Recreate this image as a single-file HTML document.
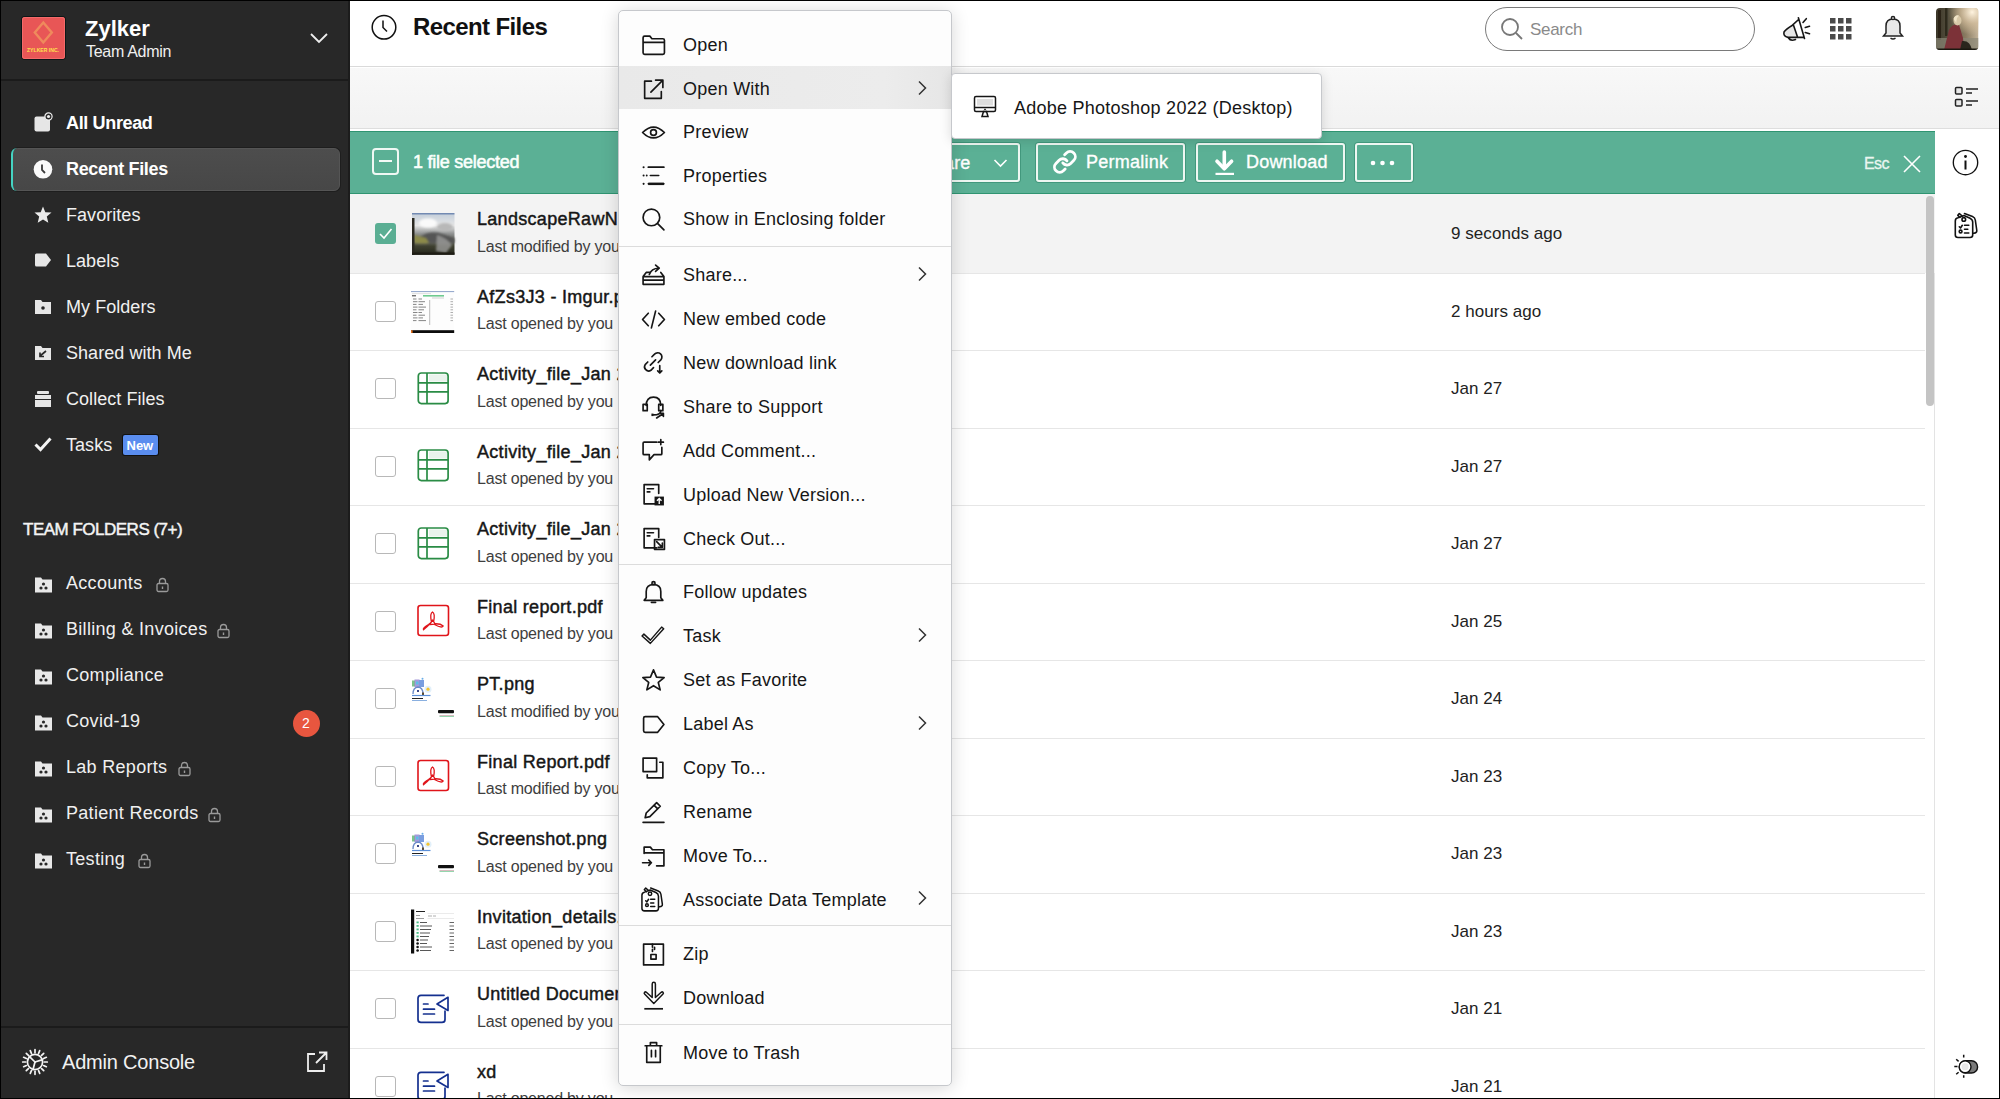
<!DOCTYPE html>
<html><head><meta charset="utf-8"><title>Recent Files</title>
<style>
html,body{margin:0;padding:0}
body{width:2000px;height:1099px;overflow:hidden;position:relative;background:#fff;font-family:"Liberation Sans", sans-serif}
.a{position:absolute}
.t{position:absolute;white-space:nowrap}
svg.a{overflow:visible}
</style></head><body>
<div class="a" style="left:0;top:0;width:2000px;height:1099px"><div class="a" style="left:0px;top:0px;width:350px;height:1099px;background:#282828"></div><div class="a" style="left:348px;top:0px;width:2px;height:1099px;background:#1c1c1c"></div><div class="a" style="left:0px;top:79px;width:348px;height:2px;background:#1b1b1b"></div><div class="a" style="left:22px;top:17px;width:42.5px;height:42px;background:#e85656;border-radius:3px;box-shadow:0 0 0 1px #0c1616,inset 0 0 0 1px #f46a6a"></div><svg class="a" style="left:22px;top:17px;" width="42" height="42" viewBox="0 0 42 42"><path d="M21.3 5.5 L29.8 15.5 L21.3 25.5 L12.8 15.5 Z" fill="none" stroke="#ef8a5c" stroke-width="2.4"/><text x="21" y="35.3" font-size="6" font-weight="bold" fill="#ffe14d" text-anchor="middle" textLength="32" lengthAdjust="spacingAndGlyphs" font-family="Liberation Sans">ZYLKER INC.</text></svg><div class="t" style="left:85px;top:18.38px;font-size:22px;line-height:22px;color:#fff;font-weight:700;letter-spacing:0px;">Zylker</div><div class="t" style="left:86px;top:44.26px;font-size:16px;line-height:16px;color:#f0f0f0;font-weight:400;letter-spacing:-0.3px;">Team Admin</div><svg class="a" style="left:309px;top:31px;" width="20" height="14" viewBox="0 0 20 14"><path d="M2 3 L10 11 L18 3" fill="none" stroke="#eee" stroke-width="1.8"/></svg><div class="a" style="left:12px;top:147.5px;width:328px;height:43px;background:linear-gradient(180deg,#4d4d4d,#474747);border:1px solid #555;border-radius:6px;box-sizing:border-box;box-shadow:0 0 0 1px #1e1e1e"></div><div class="a" style="left:11px;top:147.5px;width:6px;height:43px;border-left:2.5px solid #45d3c2;border-radius:6px 0 0 6px;box-sizing:border-box"></div><svg class="a" style="left:34px;top:113.5px;" width="18" height="18" viewBox="0 0 18 18"><rect x="0.5" y="2.5" width="15.5" height="15" rx="2" fill="#e6e6e6"/><circle cx="14.5" cy="2.5" r="3.6" fill="#282828" stroke="#eee" stroke-width="1.2"/><circle cx="14.5" cy="2.5" r="1.6" fill="#eee"/></svg><div class="t" style="left:66px;top:114.26px;font-size:18px;line-height:18px;color:#ffffff;font-weight:700;letter-spacing:-0.35px;">All Unread</div><svg class="a" style="left:34px;top:159.5px;" width="18" height="18" viewBox="0 0 18 18"><circle cx="9" cy="9.3" r="9.3" fill="#fafafa"/><path d="M8 4.5 V10 L11 13" stroke="#3a3a3a" stroke-width="1.8" fill="none"/></svg><div class="t" style="left:66px;top:160.26px;font-size:18px;line-height:18px;color:#ffffff;font-weight:700;letter-spacing:-0.35px;">Recent Files</div><svg class="a" style="left:34px;top:205.5px;" width="18" height="18" viewBox="0 0 18 18"><path d="M9 0.5 L11.3 6.2 L17.5 6.6 L12.8 10.6 L14.3 16.8 L9 13.4 L3.7 16.8 L5.2 10.6 L0.5 6.6 L6.7 6.2 Z" fill="#ececec"/></svg><div class="t" style="left:66px;top:206.26px;font-size:18px;line-height:18px;color:#f0f0f0;font-weight:400;letter-spacing:0.05px;">Favorites</div><svg class="a" style="left:34px;top:251.5px;" width="18" height="18" viewBox="0 0 18 18"><path d="M1 3 Q1 1.5 2.5 1.5 H12 L17 8 L12 14.5 H2.5 Q1 14.5 1 13 Z" fill="#e6e6e6"/></svg><div class="t" style="left:66px;top:252.26px;font-size:18px;line-height:18px;color:#f0f0f0;font-weight:400;letter-spacing:0.05px;">Labels</div><svg class="a" style="left:34px;top:297.5px;" width="18" height="18" viewBox="0 0 18 18"><path d="M1 2 H7 L8.5 4 H17 V16 H1 Z" fill="#e6e6e6"/><circle cx="9" cy="10" r="1.8" fill="#282828"/></svg><div class="t" style="left:66px;top:298.26px;font-size:18px;line-height:18px;color:#f0f0f0;font-weight:400;letter-spacing:0.05px;">My Folders</div><svg class="a" style="left:34px;top:343.5px;" width="18" height="18" viewBox="0 0 18 18"><path d="M1 2 H7 L8.5 4 H17 V16 H1 Z" fill="#e6e6e6"/><path d="M12 7 L6 12 M6 8.5 V12.5 H10" stroke="#282828" stroke-width="1.7" fill="none"/></svg><div class="t" style="left:66px;top:344.26px;font-size:18px;line-height:18px;color:#f0f0f0;font-weight:400;letter-spacing:0.05px;">Shared with Me</div><svg class="a" style="left:34px;top:389.5px;" width="18" height="18" viewBox="0 0 18 18"><rect x="3" y="1" width="12" height="3" rx="1" fill="#e6e6e6"/><rect x="1" y="5" width="16" height="4" fill="#e6e6e6"/><rect x="1" y="10" width="16" height="7" fill="#e6e6e6"/></svg><div class="t" style="left:66px;top:390.26px;font-size:18px;line-height:18px;color:#f0f0f0;font-weight:400;letter-spacing:0.05px;">Collect Files</div><svg class="a" style="left:34px;top:435.5px;" width="18" height="18" viewBox="0 0 18 18"><path d="M1.5 8.5 L6.5 13.5 L16.5 2.5" stroke="#f4f4f4" stroke-width="3" fill="none"/></svg><div class="t" style="left:66px;top:436.26px;font-size:18px;line-height:18px;color:#f0f0f0;font-weight:400;letter-spacing:0.05px;">Tasks</div><div class="a" style="left:123px;top:435px;width:35px;height:20px;background:#5a8def;border-radius:2px;box-shadow:0 0 0 1px #111"></div><div class="t" style="left:126.5px;top:438.50px;font-size:13px;line-height:13px;color:#fff;font-weight:700;letter-spacing:0px;">New</div><div class="t" style="left:23px;top:520.81px;font-size:17px;line-height:17px;color:#f4f4f4;font-weight:400;letter-spacing:-0.5px;-webkit-text-stroke:0.45px #f4f4f4">TEAM FOLDERS (7+)</div><svg class="a" style="left:34px;top:575.5px;" width="19" height="17" viewBox="0 0 19 17"><path d="M1 1.5 H7 L8.5 3.5 H18 V16.5 H1 Z" fill="#e8e8e8"/><circle cx="9.5" cy="8" r="1.6" fill="#282828"/><circle cx="7" cy="12" r="1.6" fill="#282828"/><circle cx="12" cy="12" r="1.6" fill="#282828"/></svg><div class="t" style="left:66px;top:574.26px;font-size:18px;line-height:18px;color:#f0f0f0;font-weight:400;letter-spacing:0.3px;">Accounts</div><svg class="a" style="left:156px;top:576.5px;" width="13" height="15" viewBox="0 0 13 15"><rect x="1" y="6.5" width="11" height="8" rx="1.5" fill="none" stroke="#9a9a9a" stroke-width="1.3"/><path d="M3.5 6.5 V4.5 A3 3 0 0 1 9.5 4.5 V6.5" fill="none" stroke="#9a9a9a" stroke-width="1.3"/><rect x="5.8" y="9.5" width="1.4" height="2.5" fill="#9a9a9a"/></svg><svg class="a" style="left:34px;top:621.5px;" width="19" height="17" viewBox="0 0 19 17"><path d="M1 1.5 H7 L8.5 3.5 H18 V16.5 H1 Z" fill="#e8e8e8"/><circle cx="9.5" cy="8" r="1.6" fill="#282828"/><circle cx="7" cy="12" r="1.6" fill="#282828"/><circle cx="12" cy="12" r="1.6" fill="#282828"/></svg><div class="t" style="left:66px;top:620.26px;font-size:18px;line-height:18px;color:#f0f0f0;font-weight:400;letter-spacing:0.3px;">Billing &amp; Invoices</div><svg class="a" style="left:217px;top:622.5px;" width="13" height="15" viewBox="0 0 13 15"><rect x="1" y="6.5" width="11" height="8" rx="1.5" fill="none" stroke="#9a9a9a" stroke-width="1.3"/><path d="M3.5 6.5 V4.5 A3 3 0 0 1 9.5 4.5 V6.5" fill="none" stroke="#9a9a9a" stroke-width="1.3"/><rect x="5.8" y="9.5" width="1.4" height="2.5" fill="#9a9a9a"/></svg><svg class="a" style="left:34px;top:667.5px;" width="19" height="17" viewBox="0 0 19 17"><path d="M1 1.5 H7 L8.5 3.5 H18 V16.5 H1 Z" fill="#e8e8e8"/><circle cx="9.5" cy="8" r="1.6" fill="#282828"/><circle cx="7" cy="12" r="1.6" fill="#282828"/><circle cx="12" cy="12" r="1.6" fill="#282828"/></svg><div class="t" style="left:66px;top:666.26px;font-size:18px;line-height:18px;color:#f0f0f0;font-weight:400;letter-spacing:0.3px;">Compliance</div><svg class="a" style="left:34px;top:713.5px;" width="19" height="17" viewBox="0 0 19 17"><path d="M1 1.5 H7 L8.5 3.5 H18 V16.5 H1 Z" fill="#e8e8e8"/><circle cx="9.5" cy="8" r="1.6" fill="#282828"/><circle cx="7" cy="12" r="1.6" fill="#282828"/><circle cx="12" cy="12" r="1.6" fill="#282828"/></svg><div class="t" style="left:66px;top:712.26px;font-size:18px;line-height:18px;color:#f0f0f0;font-weight:400;letter-spacing:0.3px;">Covid-19</div><div class="a" style="left:293px;top:709.5px;width:27px;height:27px;background:#e8563f;border-radius:50%"></div><div class="t" style="left:302px;top:716.15px;font-size:14px;line-height:14px;color:#fff;font-weight:400;letter-spacing:0px;">2</div><svg class="a" style="left:34px;top:759.5px;" width="19" height="17" viewBox="0 0 19 17"><path d="M1 1.5 H7 L8.5 3.5 H18 V16.5 H1 Z" fill="#e8e8e8"/><circle cx="9.5" cy="8" r="1.6" fill="#282828"/><circle cx="7" cy="12" r="1.6" fill="#282828"/><circle cx="12" cy="12" r="1.6" fill="#282828"/></svg><div class="t" style="left:66px;top:758.26px;font-size:18px;line-height:18px;color:#f0f0f0;font-weight:400;letter-spacing:0.3px;">Lab Reports</div><svg class="a" style="left:178px;top:760.5px;" width="13" height="15" viewBox="0 0 13 15"><rect x="1" y="6.5" width="11" height="8" rx="1.5" fill="none" stroke="#9a9a9a" stroke-width="1.3"/><path d="M3.5 6.5 V4.5 A3 3 0 0 1 9.5 4.5 V6.5" fill="none" stroke="#9a9a9a" stroke-width="1.3"/><rect x="5.8" y="9.5" width="1.4" height="2.5" fill="#9a9a9a"/></svg><svg class="a" style="left:34px;top:805.5px;" width="19" height="17" viewBox="0 0 19 17"><path d="M1 1.5 H7 L8.5 3.5 H18 V16.5 H1 Z" fill="#e8e8e8"/><circle cx="9.5" cy="8" r="1.6" fill="#282828"/><circle cx="7" cy="12" r="1.6" fill="#282828"/><circle cx="12" cy="12" r="1.6" fill="#282828"/></svg><div class="t" style="left:66px;top:804.26px;font-size:18px;line-height:18px;color:#f0f0f0;font-weight:400;letter-spacing:0.3px;">Patient Records</div><svg class="a" style="left:208px;top:806.5px;" width="13" height="15" viewBox="0 0 13 15"><rect x="1" y="6.5" width="11" height="8" rx="1.5" fill="none" stroke="#9a9a9a" stroke-width="1.3"/><path d="M3.5 6.5 V4.5 A3 3 0 0 1 9.5 4.5 V6.5" fill="none" stroke="#9a9a9a" stroke-width="1.3"/><rect x="5.8" y="9.5" width="1.4" height="2.5" fill="#9a9a9a"/></svg><svg class="a" style="left:34px;top:851.5px;" width="19" height="17" viewBox="0 0 19 17"><path d="M1 1.5 H7 L8.5 3.5 H18 V16.5 H1 Z" fill="#e8e8e8"/><circle cx="9.5" cy="8" r="1.6" fill="#282828"/><circle cx="7" cy="12" r="1.6" fill="#282828"/><circle cx="12" cy="12" r="1.6" fill="#282828"/></svg><div class="t" style="left:66px;top:850.26px;font-size:18px;line-height:18px;color:#f0f0f0;font-weight:400;letter-spacing:0.3px;">Testing</div><svg class="a" style="left:138px;top:852.5px;" width="13" height="15" viewBox="0 0 13 15"><rect x="1" y="6.5" width="11" height="8" rx="1.5" fill="none" stroke="#9a9a9a" stroke-width="1.3"/><path d="M3.5 6.5 V4.5 A3 3 0 0 1 9.5 4.5 V6.5" fill="none" stroke="#9a9a9a" stroke-width="1.3"/><rect x="5.8" y="9.5" width="1.4" height="2.5" fill="#9a9a9a"/></svg><div class="a" style="left:0px;top:1026px;width:348px;height:2px;background:#1b1b1b"></div><svg class="a" style="left:22.4px;top:1049.4px;" width="26" height="26" viewBox="0 0 26 26"><g stroke="#f4f4f4" stroke-width="1.7" fill="none" stroke-linecap="round"><circle cx="13" cy="13" r="7.6"/><path d="M13 13 L20.62 10.57"/><path d="M13 13 L10.93 20.73"/><path d="M13 13 L7.25 7.44"/><path d="M22.30 13.00 L25.30 13.00"/><path d="M21.59 16.56 L24.36 17.71"/><path d="M19.58 19.58 L21.70 21.70"/><path d="M16.56 21.59 L17.71 24.36"/><path d="M13.00 22.30 L13.00 25.30"/><path d="M9.44 21.59 L8.29 24.36"/><path d="M6.42 19.58 L4.30 21.70"/><path d="M4.41 16.56 L1.64 17.71"/><path d="M3.70 13.00 L0.70 13.00"/><path d="M4.41 9.44 L1.64 8.29"/><path d="M6.42 6.42 L4.30 4.30"/><path d="M9.44 4.41 L8.29 1.64"/><path d="M13.00 3.70 L13.00 0.70"/><path d="M16.56 4.41 L17.71 1.64"/><path d="M19.58 6.42 L21.70 4.30"/><path d="M21.59 9.44 L24.36 8.29"/></g></svg><div class="t" style="left:62px;top:1052.37px;font-size:20px;line-height:20px;color:#f2f2f2;font-weight:400;letter-spacing:-0.2px;">Admin Console</div><svg class="a" style="left:305px;top:1050px;" width="24" height="24" viewBox="0 0 24 24"><g stroke="#eee" stroke-width="1.8" fill="none"><path d="M10 4 H3 V21 H19 V14"/><path d="M11 13 L21 3 M14 2.5 H21.5 V10"/></g></svg></div>
<div class="a" style="left:0;top:0;width:2000px;height:1099px;clip-path:inset(0 0 0 350px)"><div class="a" style="left:350px;top:0px;width:1650px;height:66px;background:#fff"></div><div class="a" style="left:350px;top:66px;width:1650px;height:1px;background:#dadada"></div><svg class="a" style="left:370px;top:13px;" width="28" height="28" viewBox="0 0 28 28"><circle cx="14" cy="14.3" r="11.8" fill="none" stroke="#111" stroke-width="1.5"/><path d="M13 7.5 V14.5 L17 18.5" fill="none" stroke="#111" stroke-width="1.5"/></svg><div class="t" style="left:413px;top:15.18px;font-size:24px;line-height:24px;color:#111;font-weight:700;letter-spacing:-0.6px;">Recent Files</div><div class="a" style="left:1485px;top:7px;width:270px;height:44px;border:1.5px solid #7a7a7a;border-radius:22px;box-sizing:border-box;background:#fff"></div><svg class="a" style="left:1499px;top:17px;" width="26" height="24" viewBox="0 0 26 24"><circle cx="11" cy="10" r="8" fill="none" stroke="#777" stroke-width="1.8"/><path d="M17 16 L23 22" stroke="#777" stroke-width="1.8"/></svg><div class="t" style="left:1530px;top:20.81px;font-size:17px;line-height:17px;color:#8a8a8a;font-weight:400;letter-spacing:-0.3px;">Search</div><svg class="a" style="left:1778px;top:10px;" width="40" height="38" viewBox="0 0 40 38"><g fill="none" stroke="#161616" stroke-width="1.6" stroke-linecap="round" stroke-linejoin="round"><path d="M15 15.3 L6.5 21.5 Q4.5 26 10 27.3 L19.5 27.3 Z" fill="#e6e6e6" stroke="none"/><path d="M14.5 15.2 L20.6 9.5 M20.4 7.8 L26.5 28.5 M10 27.4 L26 27.4 M14.5 15.2 Q8 19 6 22 Q5 26.5 10 27.4 M15.6 15.5 L19.6 27.3 M10.5 28 Q12.5 31.5 17.5 29.5 M25 12.5 L28.3 8.7 M27.3 17.5 L31.5 16.2 M27.3 22.5 L31.5 23.7"/></g></svg><svg class="a" style="left:1830px;top:18px;" width="22" height="22" viewBox="0 0 22 22"><rect x="0" y="0" width="5.5" height="5.5" fill="#4a4a4a"/><rect x="8" y="0" width="5.5" height="5.5" fill="#4a4a4a"/><rect x="16" y="0" width="5.5" height="5.5" fill="#4a4a4a"/><rect x="0" y="8" width="5.5" height="5.5" fill="#4a4a4a"/><rect x="8" y="8" width="5.5" height="5.5" fill="#4a4a4a"/><rect x="16" y="8" width="5.5" height="5.5" fill="#4a4a4a"/><rect x="0" y="16" width="5.5" height="5.5" fill="#4a4a4a"/><rect x="8" y="16" width="5.5" height="5.5" fill="#4a4a4a"/><rect x="16" y="16" width="5.5" height="5.5" fill="#4a4a4a"/></svg><svg class="a" style="left:1881px;top:15px;" width="24" height="25" viewBox="0 0 24 25"><g fill="#e8e8e8" stroke="#222" stroke-width="1.5"><path d="M5 18 V11 Q5 4 12 4 Q19 4 19 11 V18 L21.5 21 H2.5 Z"/><circle cx="12" cy="3" r="1.6" fill="#fff"/></g><path d="M9.5 23.2 Q12 24.8 14.5 23.2" stroke="#222" stroke-width="1.5" fill="none"/></svg><svg class="a" style="left:1935.5px;top:7.5px;" width="42.5" height="42" viewBox="0 0 42.5 42"><defs><clipPath id="av"><rect width="42.5" height="42" rx="4"/></clipPath><linearGradient id="avg" x1="0" y1="0" x2="1" y2="0"><stop offset="0" stop-color="#3b3628"/><stop offset=".35" stop-color="#5a5442"/><stop offset=".7" stop-color="#8a7c62"/><stop offset="1" stop-color="#c4b49a"/></linearGradient><radialGradient id="sun" cx=".85" cy=".1" r=".55"><stop offset="0" stop-color="#fff4e0"/><stop offset=".5" stop-color="#d8c2a0" stop-opacity=".7"/><stop offset="1" stop-color="#d8c2a0" stop-opacity="0"/></radialGradient><filter id="avb"><feGaussianBlur stdDeviation=".6"/></filter></defs><g clip-path="url(#av)"><rect width="42.5" height="42" fill="url(#avg)"/><rect width="42.5" height="42" fill="url(#sun)"/><g filter="url(#avb)"><rect x="2" y="2" width="3" height="30" fill="#2a2418"/><rect x="9" y="0" width="2.5" height="28" fill="#2e2a1e"/><path d="M0 30 H42.5 V42 H0 Z" fill="#8a8878" opacity=".7"/><path d="M8 42 L13 22 Q17 15 23 17 L27 30 L28 42 Z" fill="#7c3038"/><ellipse cx="21.5" cy="12.5" rx="4" ry="5" fill="#d8c8a8"/><path d="M17.5 11 Q19 6.5 23 7.5 Q20 10 20.5 15 Z" fill="#f0e4c8"/><path d="M26 33 Q34 32 36 42 L24 42 Z" fill="#2a261c"/></g><rect y="40.5" width="42.5" height="1.5" fill="#1a1810"/></g></svg><div class="a" style="left:350px;top:67px;width:1650px;height:61px;background:linear-gradient(180deg,#f8f8f8,#f2f2f2);border-top:1px solid #fff;box-sizing:border-box"></div><div class="a" style="left:350px;top:128px;width:1650px;height:1px;background:#dedede"></div><svg class="a" style="left:1954px;top:86px;" width="27" height="24" viewBox="0 0 27 24"><g fill="#e8e8e8" stroke="#222" stroke-width="1.5"><rect x="1.5" y="1.5" width="6.5" height="6.5" rx="1"/><rect x="1.5" y="13.5" width="6.5" height="6.5" rx="1"/></g><g stroke="#222" stroke-width="1.5"><path d="M12 3 H24 M12 7 H18 M12 15 H24 M12 19 H18"/></g></svg><div class="a" style="left:1935px;top:129px;width:65px;height:970px;background:#fff"></div><div class="a" style="left:1934px;top:194px;width:1px;height:905px;background:#e3e3e3"></div><svg class="a" style="left:1952px;top:149px;" width="27" height="27" viewBox="0 0 27 27"><circle cx="13.5" cy="13.5" r="12.2" fill="none" stroke="#111" stroke-width="1.35"/><rect x="12.5" y="11.5" width="2" height="9" fill="#111"/><circle cx="13.5" cy="7.5" r="1.4" fill="#111"/></svg><svg class="a" style="left:1948px;top:205px;" width="36" height="40" viewBox="0 0 36 40"><g fill="none" stroke="#111" stroke-width="1.6" stroke-linecap="round" stroke-linejoin="round"><path d="M16.5 8.5 L24.5 11.5 Q27 12.5 27.3 15 L28.8 25.5 Q29 28 26 28.2 L24.7 28.2"/><path d="M7.3 30 V16 Q7.3 13.3 10 12.8 L16 10.5 L22 13.2 Q24.7 14.6 24.7 17 V30 Q24.7 32.5 22 32.5 H10 Q7.3 32.5 7.3 30 Z" fill="#fff"/><circle cx="15.8" cy="14.4" r="1.8"/><path d="M12 12.3 L9.8 10.3 L11.3 8.5 L14 10.8"/><path d="M11.3 21.8 L12.5 23 L14.3 20.3 M16.5 20.2 H20.8 M16.5 24.2 H19.8 M16.5 28 H20.8"/><circle cx="12.6" cy="26.5" r="1.4"/></g></svg><svg class="a" style="left:1940px;top:1045px;" width="50" height="45" viewBox="0 0 50 45"><g stroke="#111" stroke-width="1.5"><path d="M23.7 9.8 V12.5 M23.7 30.2 V32.8 M14.3 21.5 H17.5 M16.2 14.2 L18.6 16.4 M16.2 29.3 L18.6 27.2"/></g><rect x="19.3" y="15.8" width="18.3" height="12.2" rx="6.1" fill="#7a7a7a" stroke="#111" stroke-width="1.4"/><circle cx="25.1" cy="21.8" r="5.9" fill="#fff" stroke="#111" stroke-width="1.4"/><circle cx="25.1" cy="21.8" r="3.5" fill="#e8e8e8"/></svg><div class="a" style="left:350px;top:131px;width:1585px;height:63px;background:#5bb095;border-top:1px solid #2f9471;border-bottom:1px solid #2f9471;box-sizing:border-box"></div><div class="a" style="left:372px;top:148px;width:27px;height:27px;border:2px solid #f0f8f4;border-radius:4px;box-sizing:border-box"></div><div class="a" style="left:379px;top:160px;width:13px;height:2px;background:#f4faf7"></div><div class="t" style="left:413px;top:152.96px;font-size:18px;line-height:18px;color:#fafffc;font-weight:400;letter-spacing:-0.25px;-webkit-text-stroke:0.55px #fafffc">1 file selected</div><div class="a" style="left:930px;top:143px;width:89.5px;height:39px;border:2px solid #eef7f2;border-radius:3px;box-sizing:border-box;box-shadow:0 0 0 1px rgba(20,110,80,.35)"></div><div class="t" style="left:921.5px;top:154.06px;font-size:18px;line-height:18px;color:#fff;font-weight:400;letter-spacing:0.2px;-webkit-text-stroke:0.35px #fff">Share</div><svg class="a" style="left:993px;top:157.5px;" width="15" height="10" viewBox="0 0 15 10"><path d="M1.5 2 L7.5 8 L13.5 2" stroke="#fff" stroke-width="1.6" fill="none"/></svg><div class="a" style="left:1036px;top:143px;width:148.5px;height:39px;border:2px solid #eef7f2;border-radius:3px;box-sizing:border-box;box-shadow:0 0 0 1px rgba(20,110,80,.35)"></div><svg class="a" style="left:1054px;top:151.3px;" width="21.8" height="21.8" viewBox="1.6 1.6 20.8 20.8"><g fill="none" stroke="#fff" stroke-width="2.7" stroke-linecap="round" stroke-linejoin="round"><path d="M10 13a5 5 0 0 0 7.54.54l3-3a5 5 0 0 0-7.07-7.07l-1.72 1.71"/><path d="M14 11a5 5 0 0 0-7.54-.54l-3 3a5 5 0 0 0 7.07 7.07l1.71-1.71"/></g></svg><div class="t" style="left:1086px;top:153.46px;font-size:18px;line-height:18px;color:#fff;font-weight:400;letter-spacing:0.25px;-webkit-text-stroke:0.35px #fff">Permalink</div><div class="a" style="left:1196px;top:143px;width:148.5px;height:39px;border:2px solid #eef7f2;border-radius:3px;box-sizing:border-box;box-shadow:0 0 0 1px rgba(20,110,80,.35)"></div><svg class="a" style="left:1213px;top:149px;" width="24" height="28" viewBox="0 0 24 28"><path d="M11.3 3 V17" stroke="#fff" stroke-width="3.6" stroke-linecap="round"/><path d="M4 12.2 L11.3 19.8 L18.6 12.2" stroke="#fff" stroke-width="3.6" fill="none" stroke-linecap="round" stroke-linejoin="round"/><rect x="2.5" y="23.8" width="18.5" height="2.2" fill="#fff"/></svg><div class="t" style="left:1246px;top:153.46px;font-size:18px;line-height:18px;color:#fff;font-weight:400;letter-spacing:0.2px;-webkit-text-stroke:0.35px #fff">Download</div><div class="a" style="left:1354.5px;top:143px;width:58px;height:39px;border:2px solid #eef7f2;border-radius:3px;box-sizing:border-box;box-shadow:0 0 0 1px rgba(20,110,80,.35)"></div><svg class="a" style="left:1368px;top:158px;" width="30" height="10" viewBox="0 0 30 10"><circle cx="5" cy="5" r="2.3" fill="#fff"/><circle cx="14.5" cy="5" r="2.3" fill="#fff"/><circle cx="24" cy="5" r="2.3" fill="#fff"/></svg><div class="t" style="left:1864px;top:156.06px;font-size:16px;line-height:16px;color:#eaf6f0;font-weight:400;letter-spacing:-0.6px;-webkit-text-stroke:0.3px #eaf6f0">Esc</div><svg class="a" style="left:1902px;top:154px;" width="20" height="20" viewBox="0 0 20 20"><path d="M2 2 L18 18 M18 2 L2 18" stroke="#fff" stroke-width="1.6"/></svg></div>
<div class="a" style="left:0;top:0;width:2000px;height:1099px;clip-path:inset(194px 65px 0 350px)"><div class="a" style="left:350px;top:194px;width:1585px;height:79px;background:#f3f3f3"></div><div class="a" style="left:350px;top:273px;width:1575px;height:1px;background:#e6e6e6"></div><div class="a" style="left:350px;top:350px;width:1575px;height:1px;background:#e6e6e6"></div><div class="a" style="left:350px;top:428px;width:1575px;height:1px;background:#e6e6e6"></div><div class="a" style="left:350px;top:505px;width:1575px;height:1px;background:#e6e6e6"></div><div class="a" style="left:350px;top:583px;width:1575px;height:1px;background:#e6e6e6"></div><div class="a" style="left:350px;top:660px;width:1575px;height:1px;background:#e6e6e6"></div><div class="a" style="left:350px;top:738px;width:1575px;height:1px;background:#e6e6e6"></div><div class="a" style="left:350px;top:815px;width:1575px;height:1px;background:#e6e6e6"></div><div class="a" style="left:350px;top:893px;width:1575px;height:1px;background:#e6e6e6"></div><div class="a" style="left:350px;top:970px;width:1575px;height:1px;background:#e6e6e6"></div><div class="a" style="left:350px;top:1048px;width:1575px;height:1px;background:#e6e6e6"></div><div class="a" style="left:375px;top:223px;width:21px;height:21px;background:#5aae93;border-radius:3px"></div><svg class="a" style="left:375px;top:223px;" width="21" height="21" viewBox="0 0 21 21"><path d="M5 11 L9 15 L16.5 6" stroke="#fff" stroke-width="1.6" fill="none"/></svg><svg class="a" style="left:411.75px;top:212.75px;" width="42.5" height="41.75" viewBox="0 0 42.5 41.75"><defs><linearGradient id="ph" x1="0" y1="0" x2="0" y2="1"><stop offset="0" stop-color="#5c78a8"/><stop offset=".06" stop-color="#c9d2dc"/><stop offset=".3" stop-color="#e6e6e6"/><stop offset=".5" stop-color="#8e9090"/><stop offset=".65" stop-color="#6c6e66"/><stop offset=".8" stop-color="#3e4030"/><stop offset="1" stop-color="#23241a"/></linearGradient><filter id="bl"><feGaussianBlur stdDeviation="1"/></filter></defs><rect width="42.5" height="41.75" fill="url(#ph)"/><g filter="url(#bl)"><ellipse cx="16" cy="10" rx="9" ry="4.5" fill="#fafafa"/><ellipse cx="33" cy="14" rx="8" ry="4" fill="#b8b8b8"/><path d="M8 24 Q18 17 30 21 L42.5 25 V30 L8 30 Z" fill="#555"/><path d="M2 22 L14 25 L17 30 Q10 31 2 30 Z" fill="#8c8a48"/><path d="M25 22 Q33 24 40 32 L34 40 L24 38 Z" fill="#9a9a98" opacity=".8"/></g><rect x="0" y="5" width="2.5" height="37" fill="#2a2820"/><rect x="0" y="39.5" width="42.5" height="2.25" fill="#1e1c14"/></svg><div class="t" style="left:477px;top:210.46px;font-size:18px;line-height:18px;color:#161616;font-weight:400;letter-spacing:0.3px;-webkit-text-stroke:0.45px #161616">LandscapeRawNG_1029.jpg</div><div class="t" style="left:477px;top:238.56px;font-size:16px;line-height:16px;color:#3e3e3e;font-weight:400;letter-spacing:-0.2px;">Last modified by you</div><div class="t" style="left:1451px;top:225.31px;font-size:17px;line-height:17px;color:#222;font-weight:400;letter-spacing:0.05px;">9 seconds ago</div><div class="a" style="left:375px;top:301px;width:21px;height:21px;border:1.6px solid #b8b8b8;border-radius:3px;box-sizing:border-box;background:#fff"></div><svg class="a" style="left:411.3px;top:291px;" width="43.2" height="42" viewBox="0 0 43.2 42"><rect width="43.2" height="42" fill="#fdfdfd"/><path d="M0 0.6 H43.2" stroke="#8ea3c9" stroke-width="1"/><path d="M1 2.6 H20" stroke="#ccc" stroke-width=".6"/><path d="M12 4.8 H33" stroke="#6fca90" stroke-width="1.6"/><path d="M1 4.8 H5" stroke="#333" stroke-width="1"/><path d="M18.7 9 V34" stroke="#aaa" stroke-width=".8"/><path d="M21 7 H33" stroke="#bbb" stroke-width=".7"/><path d="M2 8.0 H5.5 M7.5 8.0 H11" stroke="#777" stroke-width=".9"/><path d="M39.5 8.0 H42" stroke="#999" stroke-width=".8"/><path d="M2 10.7 H6.5 M7.5 10.7 H14" stroke="#777" stroke-width=".9"/><path d="M39.5 10.7 H42" stroke="#999" stroke-width=".8"/><path d="M2 13.4 H5.5 M7.5 13.4 H12" stroke="#777" stroke-width=".9"/><path d="M39.5 13.4 H42" stroke="#999" stroke-width=".8"/><path d="M2 16.1 H6.5 M7.5 16.1 H15" stroke="#777" stroke-width=".9"/><path d="M39.5 16.1 H42" stroke="#999" stroke-width=".8"/><path d="M2 18.8 H5.5 M7.5 18.8 H13" stroke="#777" stroke-width=".9"/><path d="M39.5 18.8 H42" stroke="#999" stroke-width=".8"/><path d="M2 21.5 H6.5 M7.5 21.5 H11" stroke="#777" stroke-width=".9"/><path d="M39.5 21.5 H42" stroke="#999" stroke-width=".8"/><path d="M2 24.2 H5.5 M7.5 24.2 H14" stroke="#777" stroke-width=".9"/><path d="M39.5 24.2 H42" stroke="#999" stroke-width=".8"/><path d="M2 26.9 H6.5 M7.5 26.9 H12" stroke="#777" stroke-width=".9"/><path d="M39.5 26.9 H42" stroke="#999" stroke-width=".8"/><path d="M2 29.6 H5.5 M7.5 29.6 H15" stroke="#777" stroke-width=".9"/><path d="M39.5 29.6 H42" stroke="#999" stroke-width=".8"/><rect x="0" y="39.2" width="43.2" height="2.8" fill="#0c0c0c"/><rect x="0" y="39.2" width="1.6" height="2.8" fill="#e8701a"/></svg><div class="t" style="left:477px;top:287.96px;font-size:18px;line-height:18px;color:#161616;font-weight:400;letter-spacing:0.3px;-webkit-text-stroke:0.45px #161616">AfZs3J3 - Imgur.png</div><div class="t" style="left:477px;top:316.06px;font-size:16px;line-height:16px;color:#3e3e3e;font-weight:400;letter-spacing:-0.2px;">Last opened by you</div><div class="t" style="left:1451px;top:302.81px;font-size:17px;line-height:17px;color:#222;font-weight:400;letter-spacing:0.05px;">2 hours ago</div><div class="a" style="left:375px;top:378px;width:21px;height:21px;border:1.6px solid #b8b8b8;border-radius:3px;box-sizing:border-box;background:#fff"></div><svg class="a" style="left:415px;top:370px;" width="36" height="36" viewBox="0 0 36 36"><rect x="14" y="4.5" width="18" height="7" fill="#e9f3ec"/><g fill="none" stroke="#2a8c45" stroke-width="1.7"><rect x="3.3" y="3" width="29.8" height="30.6" rx="3"/><path d="M3.3 12.9 H33.1 M3.3 21.9 H33.1 M12 3 V33.6"/></g></svg><div class="t" style="left:477px;top:365.46px;font-size:18px;line-height:18px;color:#161616;font-weight:400;letter-spacing:0.3px;-webkit-text-stroke:0.45px #161616">Activity_file_Jan 27.xlsx</div><div class="t" style="left:477px;top:393.56px;font-size:16px;line-height:16px;color:#3e3e3e;font-weight:400;letter-spacing:-0.2px;">Last opened by you</div><div class="t" style="left:1451px;top:380.31px;font-size:17px;line-height:17px;color:#222;font-weight:400;letter-spacing:0.05px;">Jan 27</div><div class="a" style="left:375px;top:456px;width:21px;height:21px;border:1.6px solid #b8b8b8;border-radius:3px;box-sizing:border-box;background:#fff"></div><svg class="a" style="left:415px;top:447px;" width="36" height="36" viewBox="0 0 36 36"><rect x="14" y="4.5" width="18" height="7" fill="#e9f3ec"/><g fill="none" stroke="#2a8c45" stroke-width="1.7"><rect x="3.3" y="3" width="29.8" height="30.6" rx="3"/><path d="M3.3 12.9 H33.1 M3.3 21.9 H33.1 M12 3 V33.6"/></g></svg><div class="t" style="left:477px;top:442.96px;font-size:18px;line-height:18px;color:#161616;font-weight:400;letter-spacing:0.3px;-webkit-text-stroke:0.45px #161616">Activity_file_Jan 27.xlsx</div><div class="t" style="left:477px;top:471.06px;font-size:16px;line-height:16px;color:#3e3e3e;font-weight:400;letter-spacing:-0.2px;">Last opened by you</div><div class="t" style="left:1451px;top:457.81px;font-size:17px;line-height:17px;color:#222;font-weight:400;letter-spacing:0.05px;">Jan 27</div><div class="a" style="left:375px;top:533px;width:21px;height:21px;border:1.6px solid #b8b8b8;border-radius:3px;box-sizing:border-box;background:#fff"></div><svg class="a" style="left:415px;top:525px;" width="36" height="36" viewBox="0 0 36 36"><rect x="14" y="4.5" width="18" height="7" fill="#e9f3ec"/><g fill="none" stroke="#2a8c45" stroke-width="1.7"><rect x="3.3" y="3" width="29.8" height="30.6" rx="3"/><path d="M3.3 12.9 H33.1 M3.3 21.9 H33.1 M12 3 V33.6"/></g></svg><div class="t" style="left:477px;top:520.46px;font-size:18px;line-height:18px;color:#161616;font-weight:400;letter-spacing:0.3px;-webkit-text-stroke:0.45px #161616">Activity_file_Jan 27.xlsx</div><div class="t" style="left:477px;top:548.56px;font-size:16px;line-height:16px;color:#3e3e3e;font-weight:400;letter-spacing:-0.2px;">Last opened by you</div><div class="t" style="left:1451px;top:535.31px;font-size:17px;line-height:17px;color:#222;font-weight:400;letter-spacing:0.05px;">Jan 27</div><div class="a" style="left:375px;top:611px;width:21px;height:21px;border:1.6px solid #b8b8b8;border-radius:3px;box-sizing:border-box;background:#fff"></div><svg class="a" style="left:415px;top:602px;" width="36" height="36" viewBox="0 0 36 36"><rect x="3" y="3.5" width="30.5" height="30" rx="2.5" fill="none" stroke="#e0141a" stroke-width="1.6"/><g fill="none" stroke="#e0141a" stroke-width="1.3" stroke-linejoin="round"><path d="M16.3 19 Q14.8 11.5 17.5 10 Q20.2 11.5 18.7 19 Z"/><path d="M15.5 21 Q11.5 25.5 8.5 27.8 Q7.3 26 13.5 22.5 Z"/><path d="M19.8 21.8 Q25.5 21.5 28.2 24 Q27 26.5 20 22.8 Z"/><path d="M17.5 18 L20.3 22.2 L14.8 22.6 Z"/></g></svg><div class="t" style="left:477px;top:597.96px;font-size:18px;line-height:18px;color:#161616;font-weight:400;letter-spacing:0.3px;-webkit-text-stroke:0.45px #161616">Final report.pdf</div><div class="t" style="left:477px;top:626.06px;font-size:16px;line-height:16px;color:#3e3e3e;font-weight:400;letter-spacing:-0.2px;">Last opened by you</div><div class="t" style="left:1451px;top:612.81px;font-size:17px;line-height:17px;color:#222;font-weight:400;letter-spacing:0.05px;">Jan 25</div><div class="a" style="left:375px;top:688px;width:21px;height:21px;border:1.6px solid #b8b8b8;border-radius:3px;box-sizing:border-box;background:#fff"></div><svg class="a" style="left:412px;top:675px;" width="45" height="46" viewBox="0 0 45 46"><rect x="0" y="5.5" width="3" height="6" fill="#7dc48a"/><rect x="2.5" y="4.5" width="5" height="7.5" fill="#8e7fd0" opacity=".8"/><rect x="7" y="5" width="5" height="7" fill="#7a9ee0"/><rect x="4" y="6.5" width="2.5" height="3" fill="#5ac0e8"/><circle cx="10.5" cy="3.8" r="1" fill="#6aaee8"/><circle cx="16" cy="14.2" r="3.5" fill="#cfe6f7" opacity=".6"/><path d="M1 19 Q1 12.5 6 12 Q11 12.5 11 19" fill="none" stroke="#6a8ac8" stroke-width="1.3"/><rect x="5" y="15" width="2" height="2" fill="#3a4a8a"/><circle cx="16" cy="14.2" r="1.6" fill="#f4c430"/><rect x="10" y="17.5" width="2" height="2.5" fill="#5a4a30"/><path d="M0 20.5 H18.5" stroke="#5b8fd8" stroke-width="1.2"/><path d="M0 23.5 H11" stroke="#222" stroke-width="1"/><path d="M0 25.5 H15" stroke="#8ab0e0" stroke-width="1"/><rect x="26" y="35" width="16" height="3.2" rx="1" fill="#111"/><path d="M27.5 40.6 H42" stroke="#d8a0b0" stroke-width=".8"/><path d="M27.5 41.4 H42" stroke="#6cc890" stroke-width=".8"/></svg><div class="t" style="left:477px;top:675.46px;font-size:18px;line-height:18px;color:#161616;font-weight:400;letter-spacing:0.3px;-webkit-text-stroke:0.45px #161616">PT.png</div><div class="t" style="left:477px;top:703.56px;font-size:16px;line-height:16px;color:#3e3e3e;font-weight:400;letter-spacing:-0.2px;">Last modified by you</div><div class="t" style="left:1451px;top:690.31px;font-size:17px;line-height:17px;color:#222;font-weight:400;letter-spacing:0.05px;">Jan 24</div><div class="a" style="left:375px;top:766px;width:21px;height:21px;border:1.6px solid #b8b8b8;border-radius:3px;box-sizing:border-box;background:#fff"></div><svg class="a" style="left:415px;top:757px;" width="36" height="36" viewBox="0 0 36 36"><rect x="3" y="3.5" width="30.5" height="30" rx="2.5" fill="none" stroke="#e0141a" stroke-width="1.6"/><g fill="none" stroke="#e0141a" stroke-width="1.3" stroke-linejoin="round"><path d="M16.3 19 Q14.8 11.5 17.5 10 Q20.2 11.5 18.7 19 Z"/><path d="M15.5 21 Q11.5 25.5 8.5 27.8 Q7.3 26 13.5 22.5 Z"/><path d="M19.8 21.8 Q25.5 21.5 28.2 24 Q27 26.5 20 22.8 Z"/><path d="M17.5 18 L20.3 22.2 L14.8 22.6 Z"/></g></svg><div class="t" style="left:477px;top:752.96px;font-size:18px;line-height:18px;color:#161616;font-weight:400;letter-spacing:0.3px;-webkit-text-stroke:0.45px #161616">Final Report.pdf</div><div class="t" style="left:477px;top:781.06px;font-size:16px;line-height:16px;color:#3e3e3e;font-weight:400;letter-spacing:-0.2px;">Last modified by you</div><div class="t" style="left:1451px;top:767.81px;font-size:17px;line-height:17px;color:#222;font-weight:400;letter-spacing:0.05px;">Jan 23</div><div class="a" style="left:375px;top:843px;width:21px;height:21px;border:1.6px solid #b8b8b8;border-radius:3px;box-sizing:border-box;background:#fff"></div><svg class="a" style="left:412px;top:830px;" width="45" height="46" viewBox="0 0 45 46"><rect x="0" y="5.5" width="3" height="6" fill="#7dc48a"/><rect x="2.5" y="4.5" width="5" height="7.5" fill="#8e7fd0" opacity=".8"/><rect x="7" y="5" width="5" height="7" fill="#7a9ee0"/><rect x="4" y="6.5" width="2.5" height="3" fill="#5ac0e8"/><circle cx="10.5" cy="3.8" r="1" fill="#6aaee8"/><circle cx="16" cy="14.2" r="3.5" fill="#cfe6f7" opacity=".6"/><path d="M1 19 Q1 12.5 6 12 Q11 12.5 11 19" fill="none" stroke="#6a8ac8" stroke-width="1.3"/><rect x="5" y="15" width="2" height="2" fill="#3a4a8a"/><circle cx="16" cy="14.2" r="1.6" fill="#f4c430"/><rect x="10" y="17.5" width="2" height="2.5" fill="#5a4a30"/><path d="M0 20.5 H18.5" stroke="#5b8fd8" stroke-width="1.2"/><path d="M0 23.5 H11" stroke="#222" stroke-width="1"/><path d="M0 25.5 H15" stroke="#8ab0e0" stroke-width="1"/><rect x="26" y="35" width="16" height="3.2" rx="1" fill="#111"/><path d="M27.5 40.6 H42" stroke="#d8a0b0" stroke-width=".8"/><path d="M27.5 41.4 H42" stroke="#6cc890" stroke-width=".8"/></svg><div class="t" style="left:477px;top:830.46px;font-size:18px;line-height:18px;color:#161616;font-weight:400;letter-spacing:0.3px;-webkit-text-stroke:0.45px #161616">Screenshot.png</div><div class="t" style="left:477px;top:858.56px;font-size:16px;line-height:16px;color:#3e3e3e;font-weight:400;letter-spacing:-0.2px;">Last opened by you</div><div class="t" style="left:1451px;top:845.31px;font-size:17px;line-height:17px;color:#222;font-weight:400;letter-spacing:0.05px;">Jan 23</div><div class="a" style="left:375px;top:921px;width:21px;height:21px;border:1.6px solid #b8b8b8;border-radius:3px;box-sizing:border-box;background:#fff"></div><svg class="a" style="left:411.3px;top:909px;" width="44" height="44.5" viewBox="0 0 44 44.5"><rect x="0" y="0.5" width="3.2" height="44" fill="#0e0e0e"/><path d="M5 2.5 H14" stroke="#222" stroke-width="1"/><path d="M16.5 4.5 H43 M16.5 9.5 H43" stroke="#ddd" stroke-width=".6"/><path d="M17 7 H21 M22 7 H25" stroke="#999" stroke-width=".8"/><path d="M5 6.5 H9 M5 9.5 H13" stroke="#888" stroke-width=".8"/><rect x="5.5" y="12.5" width="2.2" height="1.8" fill="#4cc08a"/><path d="M9 13.5 H16" stroke="#444" stroke-width=".9"/><path d="M38.5 13.5 H43" stroke="#555" stroke-width=".9"/><rect x="5.5" y="16.0" width="2.2" height="1.8" fill="#4cc08a"/><path d="M9 17.0 H21" stroke="#444" stroke-width=".9"/><path d="M38.5 17.0 H43" stroke="#555" stroke-width=".9"/><rect x="5.5" y="19.5" width="2.2" height="1.8" fill="#4cc08a"/><path d="M9 20.5 H20" stroke="#444" stroke-width=".9"/><path d="M38.5 20.5 H43" stroke="#555" stroke-width=".9"/><rect x="5.5" y="23.0" width="2.2" height="1.8" fill="#4cc08a"/><path d="M9 24.0 H19" stroke="#444" stroke-width=".9"/><path d="M38.5 24.0 H43" stroke="#555" stroke-width=".9"/><rect x="5.5" y="26.5" width="2.2" height="1.8" fill="#4cc08a"/><path d="M9 27.5 H18" stroke="#444" stroke-width=".9"/><path d="M38.5 27.5 H43" stroke="#555" stroke-width=".9"/><circle cx="6.6" cy="31.0" r="1.3" fill="#111"/><path d="M9 31.0 H17" stroke="#444" stroke-width=".9"/><path d="M38.5 31.0 H43" stroke="#555" stroke-width=".9"/><circle cx="6.6" cy="34.5" r="1.3" fill="#111"/><path d="M9 34.5 H16" stroke="#444" stroke-width=".9"/><path d="M38.5 34.5 H43" stroke="#555" stroke-width=".9"/><circle cx="6.6" cy="38.0" r="1.3" fill="#111"/><path d="M9 38.0 H21" stroke="#444" stroke-width=".9"/><path d="M38.5 38.0 H43" stroke="#555" stroke-width=".9"/><circle cx="6.6" cy="41.5" r="1.3" fill="#111"/><path d="M9 41.5 H20" stroke="#444" stroke-width=".9"/><path d="M38.5 41.5 H43" stroke="#555" stroke-width=".9"/></svg><div class="t" style="left:477px;top:907.96px;font-size:18px;line-height:18px;color:#161616;font-weight:400;letter-spacing:0.3px;-webkit-text-stroke:0.45px #161616">Invitation_details.png</div><div class="t" style="left:477px;top:936.06px;font-size:16px;line-height:16px;color:#3e3e3e;font-weight:400;letter-spacing:-0.2px;">Last opened by you</div><div class="t" style="left:1451px;top:922.81px;font-size:17px;line-height:17px;color:#222;font-weight:400;letter-spacing:0.05px;">Jan 23</div><div class="a" style="left:375px;top:998px;width:21px;height:21px;border:1.6px solid #b8b8b8;border-radius:3px;box-sizing:border-box;background:#fff"></div><svg class="a" style="left:415px;top:990px;" width="36" height="36" viewBox="0 0 36 36"><g fill="none" stroke="#14308f" stroke-width="1.7" stroke-linecap="round" stroke-linejoin="round"><path d="M29 5.3 H6 Q3 5.3 3 8.3 V29.4 Q3 32.4 6 32.4 H27 Q30 32.4 30 29.4 V21"/><path d="M8.5 14 H13 M8.5 19.2 H19.5 M8.5 24 H19.5"/><path d="M22 13.9 L33 7.3 V20.5 Z"/></g></svg><div class="t" style="left:477px;top:985.46px;font-size:18px;line-height:18px;color:#161616;font-weight:400;letter-spacing:0.3px;-webkit-text-stroke:0.45px #161616">Untitled Document.zdoc</div><div class="t" style="left:477px;top:1013.56px;font-size:16px;line-height:16px;color:#3e3e3e;font-weight:400;letter-spacing:-0.2px;">Last opened by you</div><div class="t" style="left:1451px;top:1000.31px;font-size:17px;line-height:17px;color:#222;font-weight:400;letter-spacing:0.05px;">Jan 21</div><div class="a" style="left:375px;top:1076px;width:21px;height:21px;border:1.6px solid #b8b8b8;border-radius:3px;box-sizing:border-box;background:#fff"></div><svg class="a" style="left:415px;top:1067px;" width="36" height="36" viewBox="0 0 36 36"><g fill="none" stroke="#14308f" stroke-width="1.7" stroke-linecap="round" stroke-linejoin="round"><path d="M29 5.3 H6 Q3 5.3 3 8.3 V29.4 Q3 32.4 6 32.4 H27 Q30 32.4 30 29.4 V21"/><path d="M8.5 14 H13 M8.5 19.2 H19.5 M8.5 24 H19.5"/><path d="M22 13.9 L33 7.3 V20.5 Z"/></g></svg><div class="t" style="left:477px;top:1062.96px;font-size:18px;line-height:18px;color:#161616;font-weight:400;letter-spacing:0.3px;-webkit-text-stroke:0.45px #161616">xd</div><div class="t" style="left:477px;top:1091.06px;font-size:16px;line-height:16px;color:#3e3e3e;font-weight:400;letter-spacing:-0.2px;">Last opened by you</div><div class="t" style="left:1451px;top:1077.81px;font-size:17px;line-height:17px;color:#222;font-weight:400;letter-spacing:0.05px;">Jan 21</div><div class="a" style="left:1926px;top:196px;width:8px;height:210px;background:#c4c4c4;border-radius:4px"></div></div>
<div class="a" style="left:0;top:0;width:2000px;height:1099px"><div class="a" style="left:618px;top:10px;width:334px;height:1076px;background:#fdfdfd;border:1px solid #c6c8cc;border-radius:5px;box-sizing:border-box;box-shadow:0 2px 18px rgba(0,0,0,.16)"></div><div class="a" style="left:619px;top:66px;width:332px;height:42.5px;background:linear-gradient(90deg,#e9e9e9,#ececec 80%,#e6e6e6)"></div><div class="a" style="left:619px;top:246px;width:332px;height:1px;background:#dcdcdc"></div><div class="a" style="left:619px;top:564px;width:332px;height:1px;background:#dcdcdc"></div><div class="a" style="left:619px;top:925px;width:332px;height:1px;background:#dcdcdc"></div><div class="a" style="left:619px;top:1024px;width:332px;height:1px;background:#dcdcdc"></div><svg class="a" style="left:640.5px;top:32.5px;" width="25" height="25" viewBox="0 0 24 24"><path d="M2 4.5 Q2 3 3.5 3 H8.5 L10.5 5.5 H21 Q22.5 5.5 22.5 7 V19 Q22.5 20.5 21 20.5 H3.5 Q2 20.5 2 19 Z M2 9 H22.5" fill="none" stroke="#161616" stroke-width="1.6" stroke-linejoin="round" stroke-linecap="round"/></svg><div class="t" style="left:683px;top:36.36px;font-size:18px;line-height:18px;color:#161616;font-weight:400;letter-spacing:0.22px;">Open</div><svg class="a" style="left:640.5px;top:76.5px;" width="25" height="25" viewBox="0 0 24 24"><path d="M10 4 H3.5 V20.5 H19.5 V14" fill="none" stroke="#161616" stroke-width="1.6" stroke-linejoin="round" stroke-linecap="round"/><path d="M9.5 14.5 L21 3 M14 3 H21 V10" fill="none" stroke="#161616" stroke-width="1.6" stroke-linejoin="round" stroke-linecap="round"/></svg><div class="t" style="left:683px;top:79.86px;font-size:18px;line-height:18px;color:#161616;font-weight:400;letter-spacing:0.22px;">Open With</div><svg class="a" style="left:916px;top:80px;" width="12" height="16" viewBox="0 0 12 16"><path d="M3 1.5 L9.5 8 L3 14.5" stroke="#333" stroke-width="1.5" fill="none"/></svg><svg class="a" style="left:640.5px;top:119.5px;" width="25" height="25" viewBox="0 0 24 24"><path d="M1.5 12 Q12 1.5 22.5 12 Q12 22.5 1.5 12 Z" fill="none" stroke="#161616" stroke-width="1.6" stroke-linejoin="round" stroke-linecap="round"/><circle cx="12" cy="12" r="2.8" fill="none" stroke="#161616" stroke-width="1.6" stroke-linejoin="round" stroke-linecap="round"/></svg><div class="t" style="left:683px;top:123.36px;font-size:18px;line-height:18px;color:#161616;font-weight:400;letter-spacing:0.22px;">Preview</div><svg class="a" style="left:640.5px;top:162.5px;" width="25" height="25" viewBox="0 0 24 24"><path d="M7 4 H22 M9 12 H17 M7 20 H22" fill="none" stroke="#161616" stroke-width="1.6" stroke-linejoin="round" stroke-linecap="round"/><path d="M7 20 H22" stroke="#161616" stroke-width="2.4"/><circle cx="2.5" cy="4" r="1" fill="#161616"/><circle cx="2.5" cy="12" r="1" fill="#161616"/><circle cx="2.5" cy="20" r="1" fill="#161616"/><circle cx="5.5" cy="12" r="0.9" fill="#161616"/></svg><div class="t" style="left:683px;top:166.86px;font-size:18px;line-height:18px;color:#161616;font-weight:400;letter-spacing:0.22px;">Properties</div><svg class="a" style="left:640.5px;top:206.5px;" width="25" height="25" viewBox="0 0 24 24"><circle cx="10" cy="10" r="8" fill="none" stroke="#161616" stroke-width="1.6" stroke-linejoin="round" stroke-linecap="round"/><path d="M16 16 L22 22" fill="none" stroke="#161616" stroke-width="1.6" stroke-linejoin="round" stroke-linecap="round"/></svg><div class="t" style="left:683px;top:210.36px;font-size:18px;line-height:18px;color:#161616;font-weight:400;letter-spacing:0.22px;">Show in Enclosing folder</div><svg class="a" style="left:640.5px;top:262.5px;" width="25" height="25" viewBox="0 0 24 24"><path d="M2 13 L5 9 H9 M2 13 V20.5 H22 V13 L19 9 M2 13 H22 M2 16.5 H22" fill="none" stroke="#161616" stroke-width="1.6" stroke-linejoin="round" stroke-linecap="round"/><path d="M8 11 Q10 5 17 5 M14 2 L17.5 5 L14 8" fill="none" stroke="#161616" stroke-width="1.6" stroke-linejoin="round" stroke-linecap="round"/></svg><div class="t" style="left:683px;top:266.16px;font-size:18px;line-height:18px;color:#161616;font-weight:400;letter-spacing:0.22px;">Share...</div><svg class="a" style="left:916px;top:266px;" width="12" height="16" viewBox="0 0 12 16"><path d="M3 1.5 L9.5 8 L3 14.5" stroke="#333" stroke-width="1.5" fill="none"/></svg><svg class="a" style="left:640.5px;top:306.5px;" width="25" height="25" viewBox="0 0 24 24"><path d="M7 6 L1.5 12 L7 18 M17 6 L22.5 12 L17 18 M14 4 L10 20" fill="none" stroke="#161616" stroke-width="1.6" stroke-linejoin="round" stroke-linecap="round"/></svg><div class="t" style="left:683px;top:309.96px;font-size:18px;line-height:18px;color:#161616;font-weight:400;letter-spacing:0.22px;">New embed code</div><svg class="a" style="left:640.5px;top:349.5px;" width="25" height="25" viewBox="0 0 24 24"><path d="M10.5 6.5 L13 4 A4 4 0 0 1 19 9.5 L16.5 12" fill="none" stroke="#161616" stroke-width="1.6" stroke-linejoin="round" stroke-linecap="round"/><path d="M12 17 L9.5 19.5 A4 4 0 0 1 4 14 L6.5 11.5" fill="none" stroke="#161616" stroke-width="1.6" stroke-linejoin="round" stroke-linecap="round"/><path d="M9 14.5 L14 9.5" fill="none" stroke="#161616" stroke-width="1.6" stroke-linejoin="round" stroke-linecap="round"/><path d="M18 15 V22 M16 20 L18 22 L20 20" fill="none" stroke="#161616" stroke-width="1.6" stroke-linejoin="round" stroke-linecap="round"/></svg><div class="t" style="left:683px;top:353.76px;font-size:18px;line-height:18px;color:#161616;font-weight:400;letter-spacing:0.22px;">New download link</div><svg class="a" style="left:640.5px;top:393.5px;" width="25" height="25" viewBox="0 0 24 24"><path d="M5 11 Q5 3 12 3 Q19 3 19 11" fill="none" stroke="#161616" stroke-width="1.6" stroke-linejoin="round" stroke-linecap="round"/><rect x="2" y="10" width="4" height="6" fill="none" stroke="#161616" stroke-width="1.6" stroke-linejoin="round" stroke-linecap="round"/><rect x="17" y="10" width="4" height="6" fill="none" stroke="#161616" stroke-width="1.6" stroke-linejoin="round" stroke-linecap="round"/><path d="M19 16 Q19 20 12 20" fill="none" stroke="#161616" stroke-width="1.6" stroke-linejoin="round" stroke-linecap="round"/><path d="M10 20 H12" stroke="#161616" stroke-width="2.4"/><path d="M15 23 L21 19 M18.5 18.5 H21.5 V21.5" fill="none" stroke="#161616" stroke-width="1.6" stroke-linejoin="round" stroke-linecap="round"/></svg><div class="t" style="left:683px;top:397.66px;font-size:18px;line-height:18px;color:#161616;font-weight:400;letter-spacing:0.22px;">Share to Support</div><svg class="a" style="left:640.5px;top:437.5px;" width="25" height="25" viewBox="0 0 24 24"><path d="M15 4 H3 Q2 4 2 5 V15 Q2 16 3 16 H8 V21 L12.5 16 H19 Q20 16 20 15 V9" fill="none" stroke="#161616" stroke-width="1.6" stroke-linejoin="round" stroke-linecap="round"/><path d="M19 1.5 V6.5 M16.5 4 H21.5" fill="none" stroke="#161616" stroke-width="1.6" stroke-linejoin="round" stroke-linecap="round"/></svg><div class="t" style="left:683px;top:441.66px;font-size:18px;line-height:18px;color:#161616;font-weight:400;letter-spacing:0.22px;">Add Comment...</div><svg class="a" style="left:640.5px;top:481.5px;" width="25" height="25" viewBox="0 0 24 24"><path d="M15 21 H3 V2.5 H17 V11" fill="none" stroke="#161616" stroke-width="1.6" stroke-linejoin="round" stroke-linecap="round"/><path d="M6 6.5 H12 M6 9.5 H8.5" fill="none" stroke="#161616" stroke-width="1.6" stroke-linejoin="round" stroke-linecap="round"/><rect x="13" y="14" width="9" height="8.5" fill="#161616"/><path d="M17.5 21 V16 M15.3 18 L17.5 15.8 L19.7 18" stroke="#fff" stroke-width="1.3" fill="none"/></svg><div class="t" style="left:683px;top:485.66px;font-size:18px;line-height:18px;color:#161616;font-weight:400;letter-spacing:0.22px;">Upload New Version...</div><svg class="a" style="left:640.5px;top:525.5px;" width="25" height="25" viewBox="0 0 24 24"><path d="M15 21 H3 V2.5 H17 V11" fill="none" stroke="#161616" stroke-width="1.6" stroke-linejoin="round" stroke-linecap="round"/><path d="M6 6.5 H12 M6 9.5 H8.5" fill="none" stroke="#161616" stroke-width="1.6" stroke-linejoin="round" stroke-linecap="round"/><rect x="13" y="13" width="9.5" height="9.5" fill="none" stroke="#161616" stroke-width="1.6" stroke-linejoin="round" stroke-linecap="round"/><path d="M15 15 L20.5 20.5 M20.5 16.5 V20.5 H16.5" fill="none" stroke="#161616" stroke-width="1.6" stroke-linejoin="round" stroke-linecap="round"/></svg><div class="t" style="left:683px;top:529.76px;font-size:18px;line-height:18px;color:#161616;font-weight:400;letter-spacing:0.22px;">Check Out...</div><svg class="a" style="left:640.5px;top:579.5px;" width="25" height="25" viewBox="0 0 24 24"><path d="M5 17 V11 Q5 4.5 12 4.5 Q19 4.5 19 11 V17 L21 19.5 H3 Z" fill="none" stroke="#161616" stroke-width="1.6" stroke-linejoin="round" stroke-linecap="round"/><circle cx="12" cy="3" r="1.5" fill="none" stroke="#161616" stroke-width="1.6" stroke-linejoin="round" stroke-linecap="round"/><path d="M10 21.5 H14" fill="none" stroke="#161616" stroke-width="1.6" stroke-linejoin="round" stroke-linecap="round"/></svg><div class="t" style="left:683px;top:583.16px;font-size:18px;line-height:18px;color:#161616;font-weight:400;letter-spacing:0.22px;">Follow updates</div><svg class="a" style="left:640.5px;top:623.5px;" width="25" height="25" viewBox="0 0 24 24"><path d="M1 11.5 L2.8 9.7 L9 15.5 L19.8 3 L21.8 4.6 L9 18.6 Z" fill="none" stroke="#161616" stroke-width="1.4" stroke-linejoin="round"/></svg><div class="t" style="left:683px;top:627.16px;font-size:18px;line-height:18px;color:#161616;font-weight:400;letter-spacing:0.22px;">Task</div><svg class="a" style="left:916px;top:627px;" width="12" height="16" viewBox="0 0 12 16"><path d="M3 1.5 L9.5 8 L3 14.5" stroke="#333" stroke-width="1.5" fill="none"/></svg><svg class="a" style="left:640.5px;top:667.5px;" width="25" height="25" viewBox="0 0 24 24"><path d="M12 1.8 L14.9 8.7 L22.2 9.2 L16.6 13.9 L18.4 21 L12 17 L5.6 21 L7.4 13.9 L1.8 9.2 L9.1 8.7 Z" fill="none" stroke="#161616" stroke-width="1.6" stroke-linejoin="round" stroke-linecap="round"/></svg><div class="t" style="left:683px;top:671.06px;font-size:18px;line-height:18px;color:#161616;font-weight:400;letter-spacing:0.22px;">Set as Favorite</div><svg class="a" style="left:640.5px;top:711.5px;" width="25" height="25" viewBox="0 0 24 24"><path d="M2.5 6 Q2.5 4.5 4 4.5 H16 L22 12 L16 19.5 H4 Q2.5 19.5 2.5 18 Z" fill="none" stroke="#161616" stroke-width="1.6" stroke-linejoin="round" stroke-linecap="round"/></svg><div class="t" style="left:683px;top:715.06px;font-size:18px;line-height:18px;color:#161616;font-weight:400;letter-spacing:0.22px;">Label As</div><svg class="a" style="left:916px;top:715px;" width="12" height="16" viewBox="0 0 12 16"><path d="M3 1.5 L9.5 8 L3 14.5" stroke="#333" stroke-width="1.5" fill="none"/></svg><svg class="a" style="left:640.5px;top:755.5px;" width="25" height="25" viewBox="0 0 24 24"><rect x="2" y="2" width="13" height="13" fill="none" stroke="#161616" stroke-width="1.6" stroke-linejoin="round" stroke-linecap="round"/><path d="M18 6 H21 V21 H6 V18" fill="none" stroke="#161616" stroke-width="1.6" stroke-linejoin="round" stroke-linecap="round"/></svg><div class="t" style="left:683px;top:758.96px;font-size:18px;line-height:18px;color:#161616;font-weight:400;letter-spacing:0.22px;">Copy To...</div><svg class="a" style="left:640.5px;top:799.5px;" width="25" height="25" viewBox="0 0 24 24"><path d="M4 17 L5 12.5 L15 2.5 L18.5 6 L8.5 16 Z M12.5 5 L16 8.5" fill="none" stroke="#161616" stroke-width="1.6" stroke-linejoin="round" stroke-linecap="round"/><path d="M2 21.5 H22" fill="none" stroke="#161616" stroke-width="1.6" stroke-linejoin="round" stroke-linecap="round"/></svg><div class="t" style="left:683px;top:802.96px;font-size:18px;line-height:18px;color:#161616;font-weight:400;letter-spacing:0.22px;">Rename</div><svg class="a" style="left:640.5px;top:843.5px;" width="25" height="25" viewBox="0 0 24 24"><path d="M3 9 V3 H9 L11 5.5 H22 V21 H15 M3 8.5 H22" fill="none" stroke="#161616" stroke-width="1.6" stroke-linejoin="round" stroke-linecap="round"/><path d="M1.5 18 H10 M7.5 15.5 L10 18 L7.5 20.5" fill="none" stroke="#161616" stroke-width="1.6" stroke-linejoin="round" stroke-linecap="round"/></svg><div class="t" style="left:683px;top:846.96px;font-size:18px;line-height:18px;color:#161616;font-weight:400;letter-spacing:0.22px;">Move To...</div><svg class="a" style="left:635.3px;top:879.5px;" width="34.2" height="38" viewBox="0 0 36 40"><g fill="none" stroke="#111" stroke-width="1.6" stroke-linecap="round" stroke-linejoin="round"><path d="M16.5 8.5 L24.5 11.5 Q27 12.5 27.3 15 L28.8 25.5 Q29 28 26 28.2 L24.7 28.2"/><path d="M7.3 30 V16 Q7.3 13.3 10 12.8 L16 10.5 L22 13.2 Q24.7 14.6 24.7 17 V30 Q24.7 32.5 22 32.5 H10 Q7.3 32.5 7.3 30 Z" fill="#fff"/><circle cx="15.8" cy="14.4" r="1.8"/><path d="M12 12.3 L9.8 10.3 L11.3 8.5 L14 10.8"/><path d="M11.3 21.8 L12.5 23 L14.3 20.3 M16.5 20.2 H20.8 M16.5 24.2 H19.8 M16.5 28 H20.8"/><circle cx="12.6" cy="26.5" r="1.4"/></g></svg><div class="t" style="left:683px;top:890.86px;font-size:18px;line-height:18px;color:#161616;font-weight:400;letter-spacing:0.22px;">Associate Data Template</div><svg class="a" style="left:916px;top:890px;" width="12" height="16" viewBox="0 0 12 16"><path d="M3 1.5 L9.5 8 L3 14.5" stroke="#333" stroke-width="1.5" fill="none"/></svg><svg class="a" style="left:640.5px;top:941.5px;" width="25" height="25" viewBox="0 0 24 24"><rect x="2.5" y="2" width="19" height="20" fill="none" stroke="#161616" stroke-width="1.6" stroke-linejoin="round" stroke-linecap="round"/><path d="M11 2 V5 M13 5 V7 M11 7 V9" fill="none" stroke="#161616" stroke-width="1.6" stroke-linejoin="round" stroke-linecap="round"/><rect x="9.5" y="12" width="5" height="4.5" fill="none" stroke="#161616" stroke-width="1.6" stroke-linejoin="round" stroke-linecap="round"/></svg><div class="t" style="left:683px;top:945.36px;font-size:18px;line-height:18px;color:#161616;font-weight:400;letter-spacing:0.22px;">Zip</div><svg class="a" style="left:636px;top:975px;" width="36" height="40" viewBox="0 0 36 40"><path d="M16.2 9 Q16.2 7.3 17.8 7.3 Q19.4 7.3 19.4 9 V22.5 L25.2 17.3 Q26.2 16.5 27 17.3 Q27.8 18.2 27 19 L17.8 28.5 L8.6 19 Q7.8 18.2 8.6 17.3 Q9.4 16.5 10.4 17.3 L16.2 22.5 Z" fill="none" stroke="#161616" stroke-width="1.5" stroke-linejoin="round"/><path d="M8.3 33.8 H27" stroke="#161616" stroke-width="1.7"/></svg><div class="t" style="left:683px;top:989.16px;font-size:18px;line-height:18px;color:#161616;font-weight:400;letter-spacing:0.22px;">Download</div><svg class="a" style="left:640.5px;top:1039.5px;" width="25" height="25" viewBox="0 0 24 24"><path d="M4 5.5 H20 M5.5 5.5 V21.5 H18.5 V5.5 M9 5.5 V2.5 H15 V5.5 M10 10 V16 M14 10 V16" fill="none" stroke="#161616" stroke-width="1.6" stroke-linejoin="round" stroke-linecap="round"/></svg><div class="t" style="left:683px;top:1043.66px;font-size:18px;line-height:18px;color:#161616;font-weight:400;letter-spacing:0.22px;">Move to Trash</div><div class="a" style="left:951px;top:73px;width:371px;height:66px;background:#fff;border:1px solid #c6c8cc;border-radius:4px;box-sizing:border-box;box-shadow:0 2px 12px rgba(0,0,0,.14)"></div><svg class="a" style="left:973px;top:95px;" width="25" height="23" viewBox="0 0 25 23"><g fill="none" stroke="#161616" stroke-width="1.5"><rect x="1.5" y="1.5" width="21" height="15" rx="1.5"/><path d="M1.5 12.5 H22.5 M9 21.5 L10.5 16.5 H13.5 L15 21.5 Z"/></g><rect x="4" y="4" width="16" height="6.5" fill="#ddd"/><path d="M12 13.2 L10.8 15 H13.2 Z" fill="#161616"/></svg><div class="t" style="left:1014px;top:98.76px;font-size:18px;line-height:18px;color:#161616;font-weight:400;letter-spacing:0.25px;">Adobe Photoshop 2022 (Desktop)</div></div>
<div class="a" style="left:0;top:0;width:2000px;height:1099px;border:1px solid #000;box-sizing:border-box"></div>
</body></html>
